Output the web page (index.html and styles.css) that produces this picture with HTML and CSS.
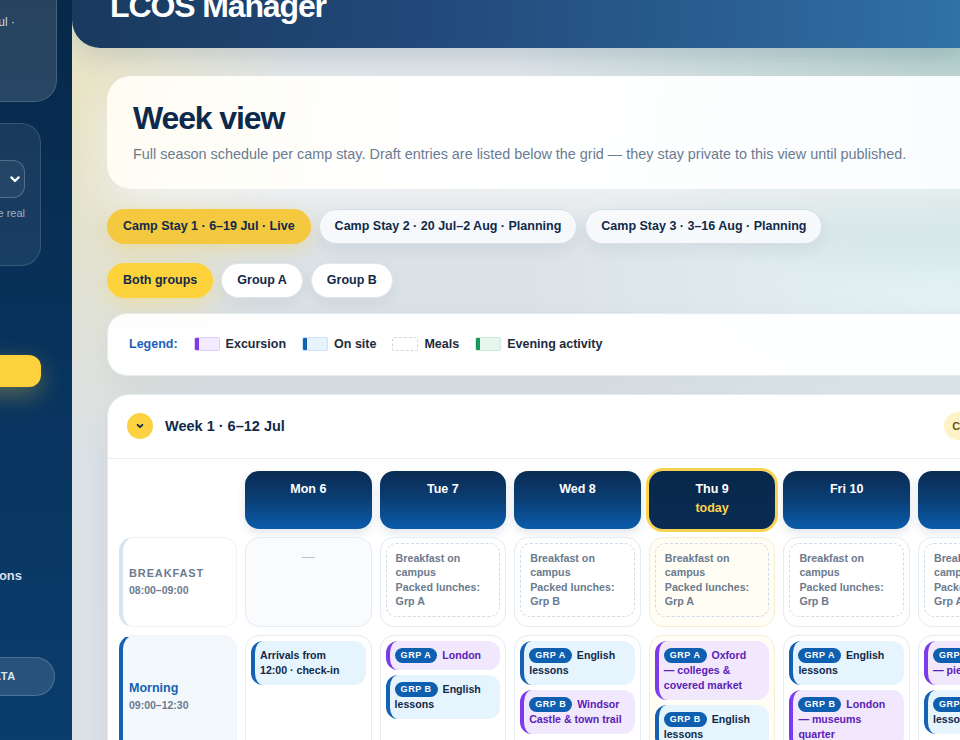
FILE: index.html
```html
<!DOCTYPE html>
<html lang="en">
<head>
<meta charset="utf-8">
<title>LCOS Manager — Week view</title>
<link rel="stylesheet" href="styles.css">
</head>
<body>
<div class="app">
  <aside class="sidebar">
    <div class="side-inner">
      <div class="side-card">
        <div class="side-stay">Current stay · 6–19 Jul ·</div>
      </div>
      <div class="side-panel">
        <div class="side-label">Camp stay</div>
        <div class="side-select">
          <span>Camp Stay 1</span>
          <svg class="sel-chev" width="10" height="7" viewBox="0 0 10 7"><path d="M1.4 1.4 L5 5 L8.6 1.4" fill="none" stroke="#ffffff" stroke-width="2.2" stroke-linecap="round" stroke-linejoin="round"/></svg>
        </div>
        <p class="side-note">Schedules update the real</p>
        <p class="side-note-end">app.</p>
      </div>
      <div class="nav-active">Week view</div>
      <div class="nav-item">Sessions</div>
      <div class="side-reset">RESET SAMPLE DATA</div>
    </div>
  </aside>

  <main class="main">
    <header class="topbar">
      <h1 class="brand">LCOS Manager</h1>
    </header>

    <div class="content">
      <section class="hero">
        <h2 class="hero-title">Week view</h2>
        <p class="hero-sub">Full season schedule per camp stay. Draft entries are listed below the grid — they stay private to this view until published.</p>
      </section>

      <div class="chips">
        <button class="chip chip-stay-active">Camp Stay 1 · 6–19 Jul · Live</button>
        <button class="chip">Camp Stay 2 · 20 Jul–2 Aug · Planning</button>
        <button class="chip">Camp Stay 3 · 3–16 Aug · Planning</button>
      </div>

      <div class="chips chips-groups">
        <button class="chip chip-group-active">Both groups</button>
        <button class="chip chip-white">Group A</button>
        <button class="chip chip-white">Group B</button>
      </div>

      <section class="legend">
        <span class="legend-title">Legend:</span>
        <span class="legend-item"><span class="sw sw-exc"></span>Excursion</span>
        <span class="legend-item"><span class="sw sw-on"></span>On site</span>
        <span class="legend-item"><span class="sw sw-meal"></span>Meals</span>
        <span class="legend-item"><span class="sw sw-eve"></span>Evening activity</span>
      </section>

      <section class="week">
        <div class="week-head">
          <button class="toggle" aria-label="Collapse week">
            <svg width="10" height="10" viewBox="0 0 10 10"><path d="M2.6 3.8 L5 6.2 L7.4 3.8" fill="none" stroke="#0f2a4a" stroke-width="1.8" stroke-linecap="round" stroke-linejoin="round"/></svg>
          </button>
          <h3 class="week-title">Week 1 · 6–12 Jul</h3>
          <span class="current">Current week</span>
        </div>

        <div class="grid">
          <div class="corner"></div>
          <div class="day">Mon 6</div>
          <div class="day">Tue 7</div>
          <div class="day">Wed 8</div>
          <div class="day day-today">Thu 9<span class="day-sub">today</span></div>
          <div class="day">Fri 10</div>
          <div class="day">Sat 11</div>
          <div class="day">Sun 12</div>

          <div class="label label-meal">
            <span class="label-name-caps">Breakfast</span>
            <span class="label-time">08:00–09:00</span>
          </div>
          <div class="cell cell-empty"><span class="dash">—</span></div>
          <div class="cell"><div class="meal">Breakfast on campus<br>Packed lunches: Grp A</div></div>
          <div class="cell"><div class="meal">Breakfast on campus<br>Packed lunches: Grp B</div></div>
          <div class="cell cell-today"><div class="meal">Breakfast on campus<br>Packed lunches: Grp A</div></div>
          <div class="cell"><div class="meal">Breakfast on campus<br>Packed lunches: Grp B</div></div>
          <div class="cell"><div class="meal">Breakfast on campus<br>Packed lunches: Grp A</div></div>
          <div class="cell"><div class="meal">Breakfast on campus<br>Packed lunches: Grp B</div></div>

          <div class="label label-session">
            <span class="label-name">Morning</span>
            <span class="label-time">09:00–12:30</span>
          </div>
          <div class="cell">
            <div class="entry entry-on">Arrivals from 12:00 · check-in</div>
          </div>
          <div class="cell">
            <div class="entry entry-exc"><span class="tag">GRP A</span> London</div>
            <div class="entry entry-on"><span class="tag">GRP B</span> English lessons</div>
          </div>
          <div class="cell">
            <div class="entry entry-on"><span class="tag">GRP A</span> English lessons</div>
            <div class="entry entry-exc"><span class="tag">GRP B</span> Windsor Castle &amp; town trail</div>
          </div>
          <div class="cell cell-today">
            <div class="entry entry-exc"><span class="tag">GRP A</span> Oxford — colleges &amp; covered market</div>
            <div class="entry entry-on"><span class="tag">GRP B</span> English lessons</div>
          </div>
          <div class="cell">
            <div class="entry entry-on"><span class="tag">GRP A</span> English lessons</div>
            <div class="entry entry-exc"><span class="tag">GRP B</span> London — museums quarter</div>
          </div>
          <div class="cell">
            <div class="entry entry-exc"><span class="tag">GRP A</span> Brighton — pier &amp; lanes</div>
            <div class="entry entry-on"><span class="tag">GRP B</span> English lessons</div>
          </div>
          <div class="cell">
            <div class="entry entry-on"><span class="tag">ALL</span> Free morning</div>
          </div>
        </div>
      </section>
    </div>
  </main>
</div>
</body>
</html>
```

FILE: styles.css
```css
* { box-sizing: border-box; }

html, body {
  margin: 0;
  height: 100%;
}

body {
  font-family: "Liberation Sans", Arial, Helvetica, sans-serif;
  color: #0f2a4a;
  background: #dfe5ea;
  overflow: hidden;
}

.app {
  display: flex;
  width: 960px;
  height: 740px;
  overflow: hidden;
}

/* ---------- Sidebar (partly scrolled out of view) ---------- */
.sidebar {
  flex: none;
  width: 72px;
  height: 740px;
  overflow: hidden;
  background: linear-gradient(180deg, #072848 0%, #08325c 45%, #0a3d6c 100%);
}

.side-inner {
  width: 240px;
  margin-left: -168px;
}

.side-card {
  margin: -24px 15px 0 16px;
  height: 126px;
  border-radius: 22px;
  background: rgba(255, 255, 255, 0.13);
  border: 1px solid rgba(255, 255, 255, 0.16);
  padding: 38px 41px 0 16px;
}

.side-stay {
  font-size: 12px;
  line-height: 14px;
  color: #c9d5e2;
  text-align: right;
  white-space: nowrap;
}

.side-panel {
  margin: 21px 31px 0 16px;
  height: 143px;
  border-radius: 20px;
  background: rgba(255, 255, 255, 0.07);
  border: 1px solid rgba(255, 255, 255, 0.13);
  padding: 16px 15px;
}

.side-label {
  font-size: 11px;
  line-height: 14px;
  font-weight: 700;
  color: #9db0c5;
  text-transform: uppercase;
  margin-bottom: 6px;
}

.side-select {
  height: 38px;
  border-radius: 12px;
  border: 1px solid rgba(255, 255, 255, 0.22);
  background: rgba(255, 255, 255, 0.05);
  display: flex;
  align-items: center;
  justify-content: space-between;
  padding: 0 4px 0 12px;
  color: #ffffff;
  font-size: 12.5px;
}

.side-note,
.side-note-end {
  margin: 0;
  font-size: 11px;
  line-height: 15px;
  color: #9db0c5;
  white-space: nowrap;
}

.side-note {
  margin-top: 8px;
  text-align: right;
}

.nav-active {
  margin: 89px 31px 0 16px;
  height: 32px;
  border-radius: 12px;
  background: #fdd23c;
  box-shadow: 0 8px 24px rgba(253, 210, 60, 0.33);
  color: #0f2a4a;
  font-size: 13px;
  font-weight: 700;
  line-height: 32px;
  padding-left: 14px;
}

.nav-item {
  margin: 181px 31px 0 16px;
  font-size: 13px;
  font-weight: 700;
  line-height: 16px;
  color: #d3dfeb;
  text-align: right;
  padding-right: 19px;
}

.side-reset {
  margin: 73px 17px 0 16px;
  height: 39px;
  border-radius: 20px;
  background: rgba(255, 255, 255, 0.12);
  border: 1px solid rgba(255, 255, 255, 0.18);
  color: #dbe5ef;
  font-size: 11px;
  font-weight: 700;
  letter-spacing: 0.06em;
  line-height: 37px;
  text-align: center;
}

/* ---------- Main ---------- */
.main {
  flex: 1;
  min-width: 0;
  height: 740px;
  overflow: hidden;
  background:
    radial-gradient(ellipse 240px 360px at 0% 14%, rgba(233, 227, 192, 0.95), rgba(233, 227, 192, 0) 100%),
    radial-gradient(ellipse 460px 250px at 100% 6%, rgba(172, 203, 198, 0.95), rgba(172, 203, 198, 0) 100%),
    radial-gradient(ellipse 420px 200px at 98% 38%, rgba(228, 243, 246, 0.95), rgba(228, 243, 246, 0) 100%),
    linear-gradient(180deg, #dbe2e7 0%, #dce2e6 100%);
}

.topbar {
  display: flow-root;
  height: 48px;
  border-bottom-left-radius: 28px;
  background: linear-gradient(90deg, #193a5e 0%, #22497a 40%, #2a5f93 75%, #3071a6 100%);
  padding-left: 38px;
  box-shadow: 0 8px 24px rgba(10, 40, 80, 0.12);
}

.brand {
  margin: -10px 0 0;
  font-size: 32px;
  line-height: 1;
  font-weight: 700;
  letter-spacing: -0.035em;
  color: #ffffff;
  white-space: nowrap;
}

.content {
  width: 979px;
  padding: 28px 0 0 35px;
}

.hero {
  border-radius: 24px;
  background: linear-gradient(100deg, rgba(255, 253, 244, 0.97) 0%, #ffffff 35%, rgba(250, 253, 255, 0.98) 100%);
  padding: 25px 26px 23px;
  box-shadow: 0 16px 44px rgba(255, 255, 255, 0.75), 0 8px 24px rgba(15, 42, 74, 0.05);
}

.hero-title {
  margin: 0;
  font-size: 32px;
  line-height: 35px;
  font-weight: 700;
  letter-spacing: -0.035em;
  color: #0d2a4c;
}

.hero-sub {
  margin: 8px 0 0;
  font-size: 14.4px;
  line-height: 21.6px;
  color: #6b7b91;
}

.chips {
  display: flex;
  gap: 8px;
  margin-top: 20px;
}

.chips-groups { margin-top: 19px; }

.chip {
  font: inherit;
  font-size: 12.5px;
  font-weight: 700;
  line-height: 15px;
  padding: 9px 15px;
  border-radius: 999px;
  border: 1px solid #d6dfe9;
  background: rgba(248, 250, 252, 0.92);
  color: #0f2a4a;
  box-shadow: 0 6px 16px rgba(15, 42, 74, 0.06);
  white-space: nowrap;
}

.chip-white { background: #ffffff; border-color: #dfe6ee; }

.chip-stay-active {
  background: #f4c83f;
  border-color: #f4c83f;
  box-shadow: 0 6px 18px rgba(244, 200, 63, 0.3);
}

.chip-group-active {
  background: #fdd23b;
  border-color: #fdd23b;
  box-shadow: 0 6px 18px rgba(253, 210, 59, 0.3);
}

.legend {
  margin-top: 15px;
  height: 63px;
  display: flex;
  align-items: center;
  gap: 16px;
  padding: 0 21px;
  border-radius: 20px;
  border: 1px solid #e3eaf1;
  background: rgba(255, 255, 255, 0.96);
  box-shadow: 0 10px 30px rgba(15, 42, 74, 0.05);
  font-size: 12.5px;
  font-weight: 700;
}

.legend-title { color: #1a62b8; }

.legend-item {
  display: flex;
  align-items: center;
  gap: 6px;
  color: #1e2b3c;
}

.sw {
  width: 26px;
  height: 14px;
  border-radius: 2px;
  border: 1px solid #dbe4ee;
}

.sw-exc { background: linear-gradient(90deg, #7c3aed 0 4px, #f2eafe 4px); border-color: #ddd0f7; }
.sw-on { background: linear-gradient(90deg, #1462b4 0 4px, #e6f4fe 4px); border-color: #cfe3f6; }
.sw-meal { background: #ffffff; border: 1px dashed #ccd9e5; }
.sw-eve { background: linear-gradient(90deg, #17985a 0 4px, #e6f6ee 4px); border-color: #cfe8dc; }

.week {
  margin-top: 18px;
  border-radius: 22px;
  border: 1px solid #e3eaf1;
  background: rgba(255, 255, 255, 0.98);
  box-shadow: 0 14px 40px rgba(15, 42, 74, 0.06);
  overflow: hidden;
  height: 400px;
}

.week-head {
  display: flex;
  align-items: center;
  gap: 12px;
  height: 64px;
  padding: 0 20px 0 19px;
  border-bottom: 1px solid #e6edf4;
}

.toggle {
  width: 26px;
  height: 26px;
  padding: 0;
  border: none;
  border-radius: 50%;
  background: #fcd240;
  display: flex;
  align-items: center;
  justify-content: center;
}

.week-title {
  margin: 0;
  font-size: 14.5px;
  font-weight: 700;
  line-height: 18px;
  color: #0f2a4a;
}

.current {
  margin-left: auto;
  height: 28px;
  line-height: 28px;
  padding: 0 8px;
  border-radius: 999px;
  background: #fdf3c6;
  color: #6b5414;
  font-size: 11px;
  font-weight: 700;
}

.grid {
  display: grid;
  grid-template-columns: 118px repeat(7, 126.6px);
  grid-template-rows: 58px 90px 125px;
  gap: 8px;
  padding: 12px 0 0 11px;
  width: max-content;
}

.day {
  border-radius: 14px;
  background: linear-gradient(180deg, #0a2b52 0%, #0b3f76 50%, #0b5cab 100%);
  color: #ffffff;
  text-align: center;
  font-size: 12.5px;
  font-weight: 700;
  line-height: 17px;
  padding-top: 10px;
  box-shadow: 0 4px 10px rgba(10, 50, 100, 0.12);
}

.day-today {
  background: linear-gradient(180deg, #08284a 0%, #0a2c52 100%);
  box-shadow: 0 0 0 3px #fcd34d;
}

.day-sub {
  display: block;
  line-height: 20px;
  color: #fcd34d;
}

.label {
  border-radius: 14px;
  border: 1px solid #eef3f8;
  border-left: 4px solid #d8e4ee;
  background: #ffffff;
  display: flex;
  flex-direction: column;
  justify-content: center;
  padding-left: 6px;
  gap: 2px;
}

.label-session {
  background: #f3f8fd;
  border-color: #eef4fa;
  border-left-color: #1462b4;
}

.label-name-caps {
  font-size: 11px;
  font-weight: 700;
  letter-spacing: 0.08em;
  text-transform: uppercase;
  color: #6b7b8f;
  line-height: 15px;
}

.label-name {
  font-size: 12.5px;
  font-weight: 700;
  color: #1462b4;
  line-height: 15px;
}

.label-time {
  font-size: 10.5px;
  font-weight: 700;
  color: #6b7b8f;
  line-height: 15px;
}

.cell {
  border-radius: 14px;
  border: 1px solid #e3ebf3;
  background: #ffffff;
  padding: 5px;
  display: flex;
  flex-direction: column;
  gap: 5px;
}

.cell-empty {
  background: #f9fbfd;
  align-items: center;
}

.cell-today {
  background: #fffdf4;
  border-color: #f4eed5;
}

.dash {
  margin-top: 7px;
  line-height: 14px;
  font-size: 13px;
  color: #b5c2d0;
}

.meal {
  border: 1px dashed #cfdbe6;
  border-radius: 10px;
  padding: 7px 9px;
  font-size: 10.7px;
  line-height: 14.5px;
  font-weight: 700;
  color: #6b7b8f;
}

.entry {
  border-radius: 12px;
  border-left: 4px solid #1462b4;
  padding: 7px 10px 7px 5px;
  font-size: 10.6px;
  line-height: 15px;
  font-weight: 700;
}

.entry-on {
  background: #e6f4fe;
  border-left-color: #1462b4;
  color: #10294a;
}

.entry-exc {
  background: #f1e8fd;
  border-left-color: #7c3aed;
  color: #5b21b6;
}

.tag {
  display: inline-block;
  background: #0f5fb0;
  color: #ffffff;
  font-size: 9px;
  letter-spacing: 0.06em;
  line-height: 11px;
  padding: 2px 6px;
  border-radius: 999px;
  margin-right: 2px;
  vertical-align: 1px;
}
```
